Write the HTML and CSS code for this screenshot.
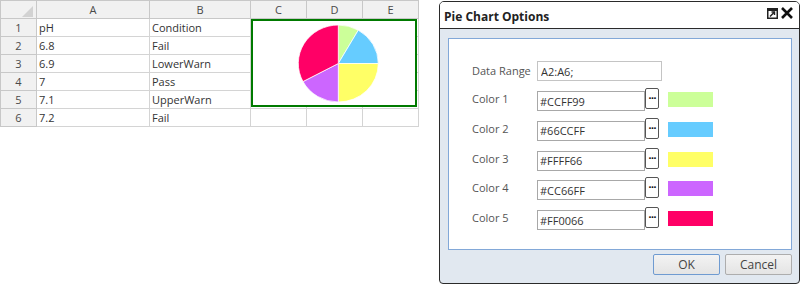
FILE: index.html
```html
<!DOCTYPE html>
<html lang="en">
<head>
  <meta charset="UTF-8" />
  <title>Pie Chart Options</title>
  <link rel="stylesheet" href="styles.css">
</head>
<body>
  <div class="desk">
    <div class="sheet">
      <table class="grid">
        <colgroup>
          <col class="c-hdr"><col class="c-a"><col class="c-b"><col class="c-c"><col class="c-d"><col class="c-e">
        </colgroup>
        <tr class="head">
          <th class="corner"><span class="tri"></span></th><th>A</th><th>B</th><th>C</th><th>D</th><th>E</th>
        </tr>
        <tr><th>1</th><td>pH</td><td>Condition</td><td></td><td></td><td></td></tr>
        <tr><th>2</th><td>6.8</td><td>Fail</td><td></td><td></td><td></td></tr>
        <tr><th>3</th><td>6.9</td><td>LowerWarn</td><td></td><td></td><td></td></tr>
        <tr><th>4</th><td>7</td><td>Pass</td><td></td><td></td><td></td></tr>
        <tr><th>5</th><td>7.1</td><td>UpperWarn</td><td></td><td></td><td></td></tr>
        <tr><th>6</th><td>7.2</td><td>Fail</td><td></td><td></td><td></td></tr>
      </table>

      <div class="chart">
        <svg width="162" height="84" viewBox="0 0 162 84">
          <g class="slices">
            <path fill="#CCFF99" d="M85.3 42.5 L85.3 4 A40 38.5 0 0 1 105.3 9.16 Z"/>
            <path fill="#66CCFF" d="M85.3 42.5 L105.3 9.16 A40 38.5 0 0 1 125.3 42.5 Z"/>
            <path fill="#FFFF66" d="M85.3 42.5 L125.3 42.5 A40 38.5 0 0 1 85.3 81 Z"/>
            <path fill="#CC66FF" d="M85.3 42.5 L85.3 81 A40 38.5 0 0 1 49.98 60.57 Z"/>
            <path fill="#FF0066" d="M85.3 42.5 L49.98 60.57 A40 38.5 0 0 1 85.3 4 Z"/>
          </g>
        </svg>
      </div>
    </div>

    <div class="dialog">
      <div class="titlebar">
        <span class="title">Pie Chart Options</span>
        <span class="tools">
          <svg class="ico-pop" width="11" height="11" viewBox="0 0 11 11">
            <rect x="0.75" y="0.75" width="9.5" height="9.5" fill="none" stroke="#222" stroke-width="1.5"/>
            <rect x="0" y="0" width="11" height="3" fill="#222"/>
            <path d="M3 8.5 L7.5 4" stroke="#222" stroke-width="1.4"/>
            <path d="M4.5 4 H7.5 V7" fill="none" stroke="#222" stroke-width="1.4"/>
          </svg>
          <svg class="ico-x" width="14" height="12" viewBox="0 0 14 12">
            <path d="M2 1 L12 11 M12 1 L2 11" stroke="#111" stroke-width="2.6"/>
          </svg>
        </span>
      </div>
      <div class="dlg-body">
        <div class="panel">
          <div class="row range">
            <label>Data Range</label>
            <input class="field wide" type="text" value="A2:A6;">
          </div>
          <div class="row color">
            <label>Color 1</label>
            <input class="field" type="text" value="#CCFF99">
            <button class="pick">···</button>
            <span class="swatch" style="background:#CCFF99"></span>
          </div>
          <div class="row color">
            <label>Color 2</label>
            <input class="field" type="text" value="#66CCFF">
            <button class="pick">···</button>
            <span class="swatch" style="background:#66CCFF"></span>
          </div>
          <div class="row color">
            <label>Color 3</label>
            <input class="field" type="text" value="#FFFF66">
            <button class="pick">···</button>
            <span class="swatch" style="background:#FFFF66"></span>
          </div>
          <div class="row color">
            <label>Color 4</label>
            <input class="field" type="text" value="#CC66FF">
            <button class="pick">···</button>
            <span class="swatch" style="background:#CC66FF"></span>
          </div>
          <div class="row color">
            <label>Color 5</label>
            <input class="field" type="text" value="#FF0066">
            <button class="pick">···</button>
            <span class="swatch" style="background:#FF0066"></span>
          </div>
        </div>
        <div class="actions">
          <button class="btn ok">OK</button>
          <button class="btn">Cancel</button>
        </div>
      </div>
    </div>
  </div>
</body>
</html>
```

FILE: styles.css
```css
* { box-sizing: border-box; margin: 0; padding: 0; }
body {
  background: #fff;
  font-family: 'Open Sans', 'Noto Sans', sans-serif;
  font-size: 11px;
  color: #333;
}
.desk {
  display: flex;
  align-items: flex-start;
}

/* spreadsheet */
.sheet {
  position: relative;
  width: 418px;
}
.grid {
  border-collapse: collapse;
  table-layout: fixed;
  width: 418px;
}
.c-hdr { width: 36px; }
.c-a { width: 113px; }
.c-b { width: 101px; }
.c-c { width: 56px; }
.c-d { width: 56px; }
.c-e { width: 56px; }
.grid tr { height: 18px; }
.grid th, .grid td {
  border: 1px solid #d4d4d4;
  padding: 0 2px;
  font-weight: normal;
  white-space: nowrap;
  overflow: hidden;
  line-height: 16px;
}
.grid th {
  background: #f1f1f1;
  color: #4a4a4a;
  text-align: center;
  border-color: #c8c8c8;
}
.grid td {
  text-align: left;
  color: #333;
}
.corner { position: relative; }
.tri {
  position: absolute;
  right: 3px;
  bottom: 1px;
  width: 0;
  height: 0;
  border-left: 11px solid transparent;
  border-bottom: 11px solid #d2d2d2;
}
.chart {
  position: absolute;
  left: 251px;
  top: 19px;
  width: 166px;
  height: 88px;
  border: 2px solid #007a00;
  background: #fff;
}
.chart svg { display: block; }
.slices path {
  stroke: rgba(255, 255, 255, 0.75);
  stroke-width: 1;
}

/* dialog */
.dialog {
  margin-left: 21px;
  margin-top: 1px;
  width: 361px;
  height: 283px;
  border: 1px solid #2a2a2a;
  border-radius: 5px 5px 4px 4px;
  background: #e1e8f0;
  overflow: hidden;
}
.titlebar {
  height: 27px;
  background: #fff;
  border-bottom: 1px solid #2a2a2a;
  display: flex;
  align-items: center;
  justify-content: space-between;
  padding: 0 5px 0 4px;
}
.title {
  font-weight: bold;
  font-size: 12px;
  color: #222;
  padding-top: 2px;
}
.tools {
  display: flex;
  align-items: center;
  gap: 2px;
  margin-top: -4px;
}
.tools svg { display: block; }
.dlg-body {
  padding: 9px 7px 0 8px;
}
.panel {
  height: 212px;
  background: #fff;
  border: 1px solid #82a8d8;
  padding: 22px 0 0 23px;
}
.row {
  display: flex;
  align-items: flex-start;
}
.row label {
  width: 65px;
  color: #555;
}
.range {
  height: 27px;
}
.range label { line-height: 20px; }
.color { height: 29.75px; }
.color label { line-height: 22px; }
.field {
  height: 20px;
  border: 1px solid #b0b0b0;
  font-family: 'Open Sans', 'Noto Sans', sans-serif;
  font-size: 11px;
  color: #333;
  padding: 0 2px;
  outline: none;
  background: #fff;
}
.wide {
  width: 125px;
  border-color: #c4c4c4;
  padding-left: 3px;
}
.color .field {
  width: 108px;
  margin-top: 3px;
  border-color: #a8a8a8;
}
.pick {
  width: 14px;
  height: 21px;
  border: 1px solid #555;
  border-radius: 2px;
  background: #fff;
  font-family: 'DejaVu Sans', sans-serif;
  font-size: 9px;
  font-weight: bold;
  line-height: 17px;
  color: #111;
  letter-spacing: -1px;
  padding: 0;
  text-align: center;
}
.swatch {
  width: 45px;
  height: 15px;
  margin: 4px 0 0 9px;
}
.actions {
  display: flex;
  justify-content: flex-end;
  gap: 5px;
  padding-top: 4px;
}
.btn {
  width: 67px;
  height: 21px;
  border: 1px solid #adadad;
  border-radius: 2px;
  background: linear-gradient(#f3f3f3, #e4e4e4);
  font-family: 'Open Sans', 'Noto Sans', sans-serif;
  font-size: 12px;
  color: #444;
}
.ok {
  border-color: #6f9bd1;
}
```
